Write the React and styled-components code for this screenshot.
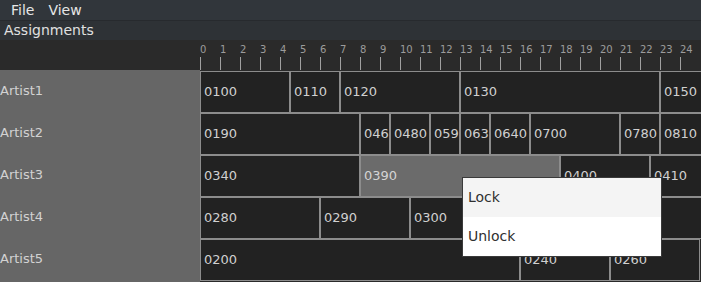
import React from "react";
import styled, { createGlobalStyle } from "styled-components";

const Global = createGlobalStyle`
  html, body { margin: 0; padding: 0; background: #2a2a2a; overflow: hidden; }
  body { font-family: "DejaVu Sans", "Noto Sans", sans-serif; }
  * { box-sizing: border-box; }
`;

const UNIT = 20;

const Page = styled.div`
  position: relative;
  width: 701px;
  height: 282px;
  overflow: hidden;
  background: #2a2a2a;
`;

const MenuBar = styled.div`
  display: flex;
  height: 21px;
  padding-left: 4px;
  background: #31363b;
  border-bottom: 1px solid #272a2e;
`;

const MenuBarItem = styled.div`
  padding: 0 7px;
  font-size: 14px;
  line-height: 20px;
  color: #e6e6e6;
`;

const TitleBar = styled.div`
  height: 19px;
  padding-left: 4px;
  background: #2e3236;
  font-size: 14px;
  line-height: 18px;
  color: #e0e0e0;
`;

const HeaderRow = styled.div`
  display: grid;
  grid-template-columns: 200px 1fr;
  height: 30px;
`;

const Ruler = styled.div`
  display: flex;
  overflow: hidden;
`;

const RulerCell = styled.div`
  flex: 0 0 ${UNIT}px;
  display: flex;
  flex-direction: column;
`;

const RulerLabel = styled.div`
  padding-top: 4px;
  height: 17px;
  font-size: 10px;
  line-height: 12px;
  color: #9c9c9c;
  white-space: nowrap;
`;

const Tick = styled.div`
  height: 13px;
  border-left: 1px solid #a0a0a0;
`;

const Body = styled.div`
  display: grid;
  grid-template-columns: 200px 1fr;
`;

const NameColumn = styled.div`
  background: #666666;
  height: 212px;
`;

const Name = styled.div`
  height: 42px;
  line-height: 42px;
  font-size: 13px;
  color: #d2d2d2;
`;

const Tracks = styled.div`
  padding-top: 1px;
  overflow: hidden;
`;

const Track = styled.div`
  display: flex;
  height: 42px;
`;

const Block = styled.div`
  flex: 0 0 ${(p) => p.$w}px;
  height: 42px;
  border: 1px solid #8c8c8c;
  background: ${(p) => (p.$selected ? "#6b6b6b" : "#222222")};
  color: ${(p) => (p.$selected ? "#d4d4d4" : "#d0d0d0")};
  font-size: 13px;
  line-height: 39px;
  padding-left: 3px;
  overflow: hidden;
  white-space: nowrap;
`;

const Popup = styled.div`
  position: absolute;
  left: 462px;
  top: 177px;
  width: 200px;
  border: 1px solid #3a3a3a;
  background: #ffffff;
`;

const PopupItem = styled.div`
  height: 39px;
  line-height: 38px;
  padding-left: 5px;
  font-size: 14px;
  color: #303030;
  background: ${(p) => (p.$active ? "#f4f4f4" : "#ffffff")};
`;

const rows = [
  {
    name: "Artist1",
    blocks: [
      ["0100", 4.5],
      ["0110", 2.5],
      ["0120", 6],
      ["0130", 10],
      ["0150", 4],
    ],
  },
  {
    name: "Artist2",
    blocks: [
      ["0190", 8],
      ["0460", 1.5],
      ["0480", 2],
      ["0590", 1.5],
      ["0630", 1.5],
      ["0640", 2],
      ["0700", 4.5],
      ["0780", 2],
      ["0810", 4],
    ],
  },
  {
    name: "Artist3",
    blocks: [
      ["0340", 8],
      ["0390", 10, true],
      ["0400", 4.5],
      ["0410", 4],
    ],
  },
  {
    name: "Artist4",
    blocks: [
      ["0280", 6],
      ["0290", 4.5],
      ["0300", 16],
    ],
  },
  {
    name: "Artist5",
    blocks: [
      ["0200", 16],
      ["0240", 4.5],
      ["0260", 4.5],
    ],
  },
];

export default function App() {
  const ticks = Array.from({ length: 25 }, (_, i) => i);
  return (
    <Page>
      <Global />
      <MenuBar>
        <MenuBarItem>File</MenuBarItem>
        <MenuBarItem>View</MenuBarItem>
      </MenuBar>
      <TitleBar>Assignments</TitleBar>
      <HeaderRow>
        <div />
        <Ruler>
          {ticks.map((t) => (
            <RulerCell key={t}>
              <RulerLabel>{t}</RulerLabel>
              <Tick />
            </RulerCell>
          ))}
        </Ruler>
      </HeaderRow>
      <Body>
        <NameColumn>
          {rows.map((r) => (
            <Name key={r.name}>{r.name}</Name>
          ))}
        </NameColumn>
        <Tracks>
          {rows.map((r) => (
            <Track key={r.name}>
              {r.blocks.map(([label, dur, sel]) => (
                <Block key={label} $w={dur * UNIT} $selected={!!sel}>
                  {label}
                </Block>
              ))}
            </Track>
          ))}
        </Tracks>
      </Body>
      <Popup>
        <PopupItem $active>Lock</PopupItem>
        <PopupItem>Unlock</PopupItem>
      </Popup>
    </Page>
  );
}
